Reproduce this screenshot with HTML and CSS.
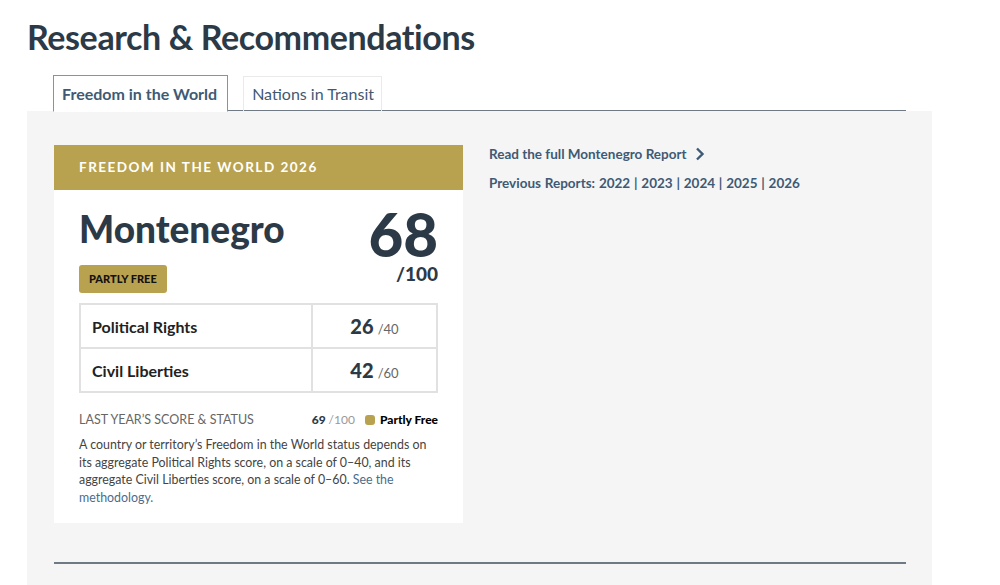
FILE: index.html
```html
<!DOCTYPE html>
<html lang="en">
<head>
<meta charset="utf-8">
<title>Research &amp; Recommendations</title>
<link rel="stylesheet" href="styles.css">
</head>
<body>
<main class="page">
  <h1 class="title">Research &amp; Recommendations</h1>
  <div class="tabs">
    <div class="tab active">Freedom in the World</div>
    <div class="tab">Nations in Transit</div>
  </div>
  <section class="panel">
    <div class="panel-row">
      <article class="card">
        <header class="card-head">FREEDOM IN THE WORLD 2026</header>
        <div class="card-body">
          <div class="summary">
            <div class="country">
              <h2 class="name">Montenegro</h2>
              <span class="badge">PARTLY FREE</span>
            </div>
            <div class="total">
              <span class="total-num">68</span>
              <span class="total-of">/100</span>
            </div>
          </div>
          <table class="scores">
            <tr>
              <td class="label">Political Rights</td>
              <td class="score"><b>26</b> <span>/40</span></td>
            </tr>
            <tr>
              <td class="label">Civil Liberties</td>
              <td class="score"><b>42</b> <span>/60</span></td>
            </tr>
          </table>
          <div class="last">
            <span class="last-label">LAST YEAR’S SCORE &amp; STATUS</span>
            <span class="last-val"><b>69</b> <span class="of">/100</span> <i class="dot"></i> <b class="status">Partly Free</b></span>
          </div>
          <p class="note">A country or territory’s Freedom in the World status depends on its aggregate Political Rights score, on a scale of 0–40, and its aggregate Civil Liberties score, on a scale of 0–60. <a href="#">See the methodology.</a></p>
        </div>
      </article>
      <aside class="links">
        <a class="report" href="#">Read the full Montenegro Report
          <svg class="chev" width="10" height="14" viewBox="0 0 10 14"><path d="M2 1.5 L7.5 7 L2 12.5" fill="none" stroke="currentColor" stroke-width="2.4"/></svg>
        </a>
        <div class="prev">Previous Reports: <a href="#">2022</a> | <a href="#">2023</a> | <a href="#">2024</a> | <a href="#">2025</a> | <a href="#">2026</a></div>
      </aside>
    </div>
    <hr class="rule">
  </section>
</main>
</body>
</html>
```

FILE: styles.css
```css
* { box-sizing: border-box; }
html, body { margin: 0; padding: 0; background: #fff; }
body {
  font-family: Lato, "Open Sans", "Liberation Sans", sans-serif;
  color: #2b3a47;
}
.page { width: 1000px; height: 585px; overflow: hidden; }
.title {
  margin: 0;
  padding: 16px 0 0 27px;
  font-size: 34px;
  line-height: 42px;
  font-weight: 700;
  letter-spacing: -0.4px;
  color: #2c3a47;
}
.tabs {
  display: flex;
  gap: 15px;
  margin: 17px 0 0 53px;
  width: 853px;
  border-bottom: 1px solid #6f7a84;
  height: 36px;
}
.tab {
  height: 35px;
  margin-top: 1px;
  padding: 0 7px 0 8px;
  font-size: 16px;
  line-height: 34px;
  color: #3e5a74;
  border: 1px solid #eaeaea;
  border-bottom: none;
}
.tab.active {
  font-weight: 700;
  margin-top: 0;
  padding: 1px 10px 0 8px;
  border: 1px solid #8a939c;
  border-bottom: 1px solid #fff;
  margin-bottom: -1px;
  height: 37px;
  background: #fff;
}
.panel {
  margin-left: 27px;
  width: 905px;
  height: 475px;
  background: #f5f5f5;
  padding: 34px 26px 0 27px;
}
.panel-row { display: flex; gap: 26px; }
.card { width: 409px; background: #fff; }
.card-head {
  height: 45px;
  background: #b9a24f;
  color: #fff;
  font-weight: 700;
  font-size: 13.5px;
  letter-spacing: 1.5px;
  line-height: 45px;
  padding-left: 25px;
}
.card-body { padding: 17px 25px 17px 25px; }
.summary { display: flex; justify-content: space-between; }
.name {
  margin: 0;
  font-size: 37px;
  line-height: 44px;
  font-weight: 900;
  color: #2c3a47;
}
.badge {
  display: inline-block;
  margin-top: 14px;
  background: #b9a24f;
  color: #111;
  font-weight: 900;
  font-size: 11px;
  padding: 0 10px;
  line-height: 28px;
  border-radius: 3px;
}
.total { display: flex; flex-direction: column; align-items: flex-end; }
.total-num {
  font-size: 60px;
  line-height: 54px;
  font-weight: 900;
  color: #2c3a47;
}
.total-of {
  font-size: 19px;
  line-height: 22px;
  font-weight: 900;
  color: #2c3a47;
  margin-top: 2px;
}
.scores {
  width: 100%;
  margin-top: 10px;
  border-collapse: collapse;
}
.scores td {
  border: 2px solid #e1e1e1;
  height: 44px;
}
.label {
  padding-left: 11px;
  font-weight: 700;
  font-size: 16px;
  color: #222;
}
.score {
  width: 125px;
  text-align: center;
  color: #2c3a47;
}
.score b { font-size: 20px; font-weight: 900; }
.score span { font-size: 13px; color: #666; }
.last {
  display: flex;
  justify-content: space-between;
  align-items: center;
  margin-top: 19px;
}
.last-label { font-size: 12.5px; color: #666; }
.last-val { font-size: 12px; color: #2c3a47; display: flex; align-items: center; gap: 3px; }
.last-val b { font-weight: 900; }
.last-val .of { color: #999; margin-right: 7px; }
.dot {
  display: inline-block;
  width: 10px;
  height: 10px;
  border-radius: 3px;
  background: #b9a24f;
  margin-right: 2px;
}
.status { color: #000; }
.note {
  margin: 9px 0 0;
  font-size: 12.4px;
  line-height: 17.5px;
  color: #444;
}
.note a { color: #4a6d8c; text-decoration: none; }
.links { margin-top: -1px; }
.report, .prev {
  font-size: 13.5px;
  font-weight: 700;
  color: #3e5a74;
  text-decoration: none;
}
.report { display: flex; align-items: center; gap: 8px; height: 20px; }
.prev { margin-top: 11px; word-spacing: 0.5px; }
.prev a { color: #3e5a74; text-decoration: none; }
.rule {
  margin: 39px 0 0 0;
  width: 852px;
  border: none;
  border-top: 2px solid #6f7a84;
}
```
